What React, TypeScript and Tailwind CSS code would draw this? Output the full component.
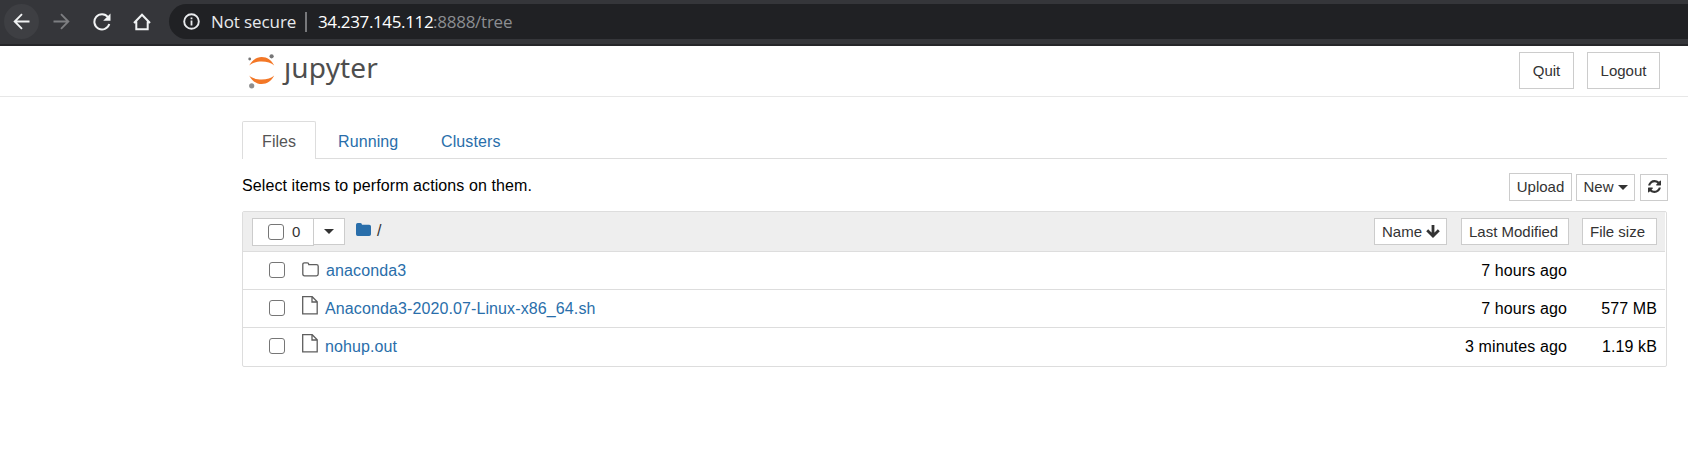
import React from "react";

function ToolbarIcons() {
  return (
    <div className="flex h-[35px] items-center">
      <span className="ml-[4px] flex h-[35px] w-[35px] items-center justify-center rounded-full bg-[#3e3f43]">
        <svg width="17" height="17" viewBox="0 0 17 17" fill="none" stroke="#f1f3f4" strokeWidth="1.9">
          <path d="M16.5 8.5H1.8M9 1.2L1.7 8.5L9 15.8" />
        </svg>
      </span>
      <svg className="ml-[14px]" width="17" height="17" viewBox="0 0 17 17" fill="none" stroke="#7d7e81" strokeWidth="1.9">
        <path d="M.5 8.5H15.2M8 1.2L15.3 8.5L8 15.8" />
      </svg>
      <svg className="ml-[23px]" width="18" height="18" viewBox="0 0 18 18">
        <path d="M15 4.2A7.6 7.6 0 1 0 16.3 11" fill="none" stroke="#f1f3f4" strokeWidth="2" />
        <path d="M17.5 .6V7.8H10.2Z" fill="#f1f3f4" />
      </svg>
      <svg className="ml-[22px]" width="18" height="18" viewBox="0 0 18 18" fill="none" stroke="#f1f3f4" strokeWidth="2">
        <path d="M1 10L9 1.8L17 10M3.3 8.5V16.3H14.7V8.5" />
      </svg>
    </div>
  );
}

function BrowserBar() {
  return (
    <div className="flex h-[46px] border-b-2 border-[#252629] bg-[#35363a] pt-[4px]">
      <ToolbarIcons />
      <div className="ml-[18px] flex h-[35px] flex-1 items-center rounded-l-full bg-[#202124] pl-[14px] font-['Open_Sans',sans-serif] text-[17px] whitespace-nowrap">
        <svg width="17" height="17" viewBox="0 0 17 17">
          <circle cx="8.5" cy="8.5" r="7.3" fill="none" stroke="#e8eaed" strokeWidth="1.9" />
          <path d="M7.6 7.6h1.8v5H7.6zM7.6 4.4h1.8v1.8H7.6z" fill="#e8eaed" />
        </svg>
        <span className="ml-[11px] w-[84px] tracking-[-0.1px] text-[#e8eaed]">Not secure</span>
        <span className="ml-[10px] h-[20px] w-[2px] bg-[#77787b]" />
        <span className="ml-[11px] w-[115px] tracking-[-0.36px] text-white">34.237.145.112</span>
        <span className="tracking-[-0.25px] text-[#8b8d91]">:8888/tree</span>
      </div>
    </div>
  );
}

function Logo() {
  return (
    <div className="flex h-[50px]">
      <svg className="mt-[7px]" width="28" height="38" viewBox="0 0 28 38">
        <path d="M1.2 12.6C3.6 7.4 8.4 4.1 13.7 4.1S23.8 7.4 26.2 12.6C23.5 9.9 18.9 8.6 13.7 8.6S3.9 9.9 1.2 12.6Z" fill="#f37726" />
        <path d="M1.2 22.6C3.6 27.8 8.4 31.1 13.7 31.1S23.8 27.8 26.2 22.6C23.5 25.3 18.9 26.6 13.7 26.6S3.9 25.3 1.2 22.6Z" fill="#f37726" />
        <circle cx="23.6" cy="3.3" r="2.1" fill="#767677" />
        <circle cx="1.7" cy="6" r="1.4" fill="#767677" />
        <circle cx="3.7" cy="32.8" r="2.6" fill="#8e8e8e" />
      </svg>
      <span className="mt-[2px] ml-[8px] h-[42px] font-['Noto_Sans',sans-serif] text-[28px] leading-[38px] tracking-[0.15px] text-[#4e4e4e] [clip-path:polygon(-8px_13px,8px_13px,8px_0,110%_0,110%_100%,-8px_100%)]">
        jupyter
      </span>
    </div>
  );
}

function Caret() {
  return (
    <svg width="10" height="5" viewBox="0 0 10 5">
      <path d="M0 0H10L5 5Z" fill="#333" />
    </svg>
  );
}

function Checkbox() {
  return <span role="checkbox" aria-checked="false" className="block h-[16px] w-[16px] shrink-0 rounded-[3px] border border-[#767676] bg-white" />;
}

const box = "flex items-center border border-[#ccc] bg-white text-[#333] whitespace-nowrap";

function FolderOutline() {
  return (
    <svg width="17" height="15" viewBox="0 0 17 15" fill="none" stroke="#5e5e5e" strokeWidth="1.3">
      <path d="M.8 2.5Q.8 .8 2.5 .8H5.2Q6.8 .8 6.8 2.6H14.5Q16.2 2.6 16.2 4.3V12Q16.2 13.8 14.5 13.8H2.5Q.8 13.8 .8 12Z" />
    </svg>
  );
}

function FileOutline() {
  return (
    <svg width="16" height="19" viewBox="0 0 16 19" fill="none" stroke="#5e5e5e" strokeWidth="1.3">
      <path d="M.7 .7H10.2L15.2 5.7V17.8H.7ZM10 .7V6H15.2" />
    </svg>
  );
}

const rows = [
  { name: "anaconda3", folder: true, modified: "7 hours ago", size: "" },
  { name: "Anaconda3-2020.07-Linux-x86_64.sh", folder: false, modified: "7 hours ago", size: "577 MB" },
  { name: "nohup.out", folder: false, modified: "3 minutes ago", size: "1.19 kB" },
];

function FileRow({ name, folder, modified, size }: (typeof rows)[number]) {
  return (
    <div className="mr-[1px] flex h-[38px] items-center border-t border-[#ddd] pr-[8px] pl-[26px] tracking-[0.11px]">
      <div className="pb-[2px]">
        <Checkbox />
      </div>
      <span className={folder ? "ml-[17px] flex h-full pt-[10px]" : "ml-[17px] flex h-full pt-[6px]"}>
        {folder ? <FolderOutline /> : <FileOutline />}
      </span>
      <span className="ml-[7px] text-[#296eaa]">{name}</span>
      <span className="ml-auto">{modified}</span>
      <span className="w-[90px] text-right">{size}</span>
    </div>
  );
}

export default function App() {
  return (
    <div className="h-[466px] overflow-hidden bg-white font-['Liberation_Sans',Arial,sans-serif] text-[16px] text-black">
      <BrowserBar />
      <header className="flex h-[51px] border-b border-[#e7e7e7] pl-[248px]">
        <Logo />
        <div className="mt-[6px] mr-[28px] ml-auto flex gap-[13px] text-[15px]">
          <button className={`${box} h-[37px] w-[55px] justify-center pt-px`}>Quit</button>
          <button className={`${box} h-[37px] w-[73px] justify-center pt-px`}>Logout</button>
        </div>
      </header>

      <main className="mt-[24px] mr-[21px] ml-[242px]">
        <nav className="flex h-[38px] border-b border-[#ddd] text-[#296eaa]">
          <span className="-mb-px flex h-[38px] w-[74px] items-center justify-center rounded-t-[2px] border border-b-0 border-[#ddd] bg-white pt-[3px] text-[#555]">Files</span>
          <span className="ml-[22px] flex w-[61px] items-center pt-[4px] tracking-[0.11px]">Running</span>
          <span className="ml-[42px] flex items-center pt-[4px] tracking-[0.11px]">Clusters</span>
        </nav>

        <div className="flex h-[52px] pt-[14px]">
          <span className="pt-[3px] leading-[20px] tracking-[0.09px]">Select items to perform actions on them.</span>
          <div className="-mr-[1px] ml-auto flex items-end self-start text-[15px]">
            <button className={`${box} h-[28px] w-[63px] justify-center`}>Upload</button>
            <button className={`${box} ml-[4px] h-[27px] w-[59px] justify-center gap-[4px]`}>
              New <Caret />
            </button>
            <button className={`${box} ml-[5px] h-[27px] w-[28px] justify-center pb-[2px]`} aria-label="Refresh">
              <svg width="13" height="13" viewBox="0 0 1536 1536" fill="#333">
                <path d="M1511 928q0 5-1 7-64 268-268 434.500T764 1536q-146 0-282.500-55T238 1324l-129 129q-19 19-45 19t-45-19-19-45V960q0-26 19-45t45-19h448q26 0 45 19t19 45-19 45l-137 137q71 66 161 102t187 36q134 0 250-65t186-179q11-17 53-117 8-23 30-23h192q13 0 22.500 9.500t9.500 22.500zm25-800v448q0 26-19 45t-45 19h-448q-26 0-45-19t-19-45 19-45l138-138Q969 256 768 256q-134 0-250 65T332 500q-11 17-53 117-8 23-30 23H50q-13 0-22.500-9.500T18 608v-7q65-268 270-434.500T768 0q146 0 284 55.500T1297 212l130-129q19-19 45-19t45 19 19 45z" />
              </svg>
            </button>
          </div>
        </div>

        <section className="h-[156px] rounded-[2px] border border-[#ddd]">
          <div className="mr-[1px] flex h-[39px] bg-[#eee] pt-[6px] pr-[8px] pl-[9px] text-[15px]">
            <div className={`${box} h-[28px] w-[62px] pl-[15px]`}>
              <Checkbox />
              <span className="ml-[8px]">0</span>
            </div>
            <div className={`${box} -ml-px h-[27px] w-[32px] justify-center`}>
              <Caret />
            </div>
            <svg className="mt-[5px] ml-[11px]" width="15" height="13" viewBox="0 0 15 13">
              <path d="M0 1.7Q0 0 1.7 0H4.3Q6 0 6 1.8H13.2Q15 1.8 15 3.5V11.2Q15 13 13.2 13H1.7Q0 13 0 11.2Z" fill="#296eaa" />
            </svg>
            <span className="ml-[6px] pt-[3px] text-[16px] leading-[20px] text-[#333]">/</span>
            <button className={`${box} ml-auto h-[27px] w-[73px] pt-px pl-[7px]`}>
              Name
              <svg className="mb-px ml-[4px]" width="14" height="13" viewBox="0 0 14 13" fill="none" stroke="#333" strokeWidth="2.8">
                <path d="M7 0V11M1.2 5.3L7 11L12.8 5.3" />
              </svg>
            </button>
            <button className={`${box} ml-[14px] h-[27px] w-[108px] pt-px pl-[7px]`}>Last Modified</button>
            <button className={`${box} ml-[13px] h-[27px] w-[75px] pt-px pl-[7px]`}>File size</button>
          </div>
          {rows.map((row) => (
            <FileRow key={row.name} {...row} />
          ))}
        </section>
      </main>
    </div>
  );
}
